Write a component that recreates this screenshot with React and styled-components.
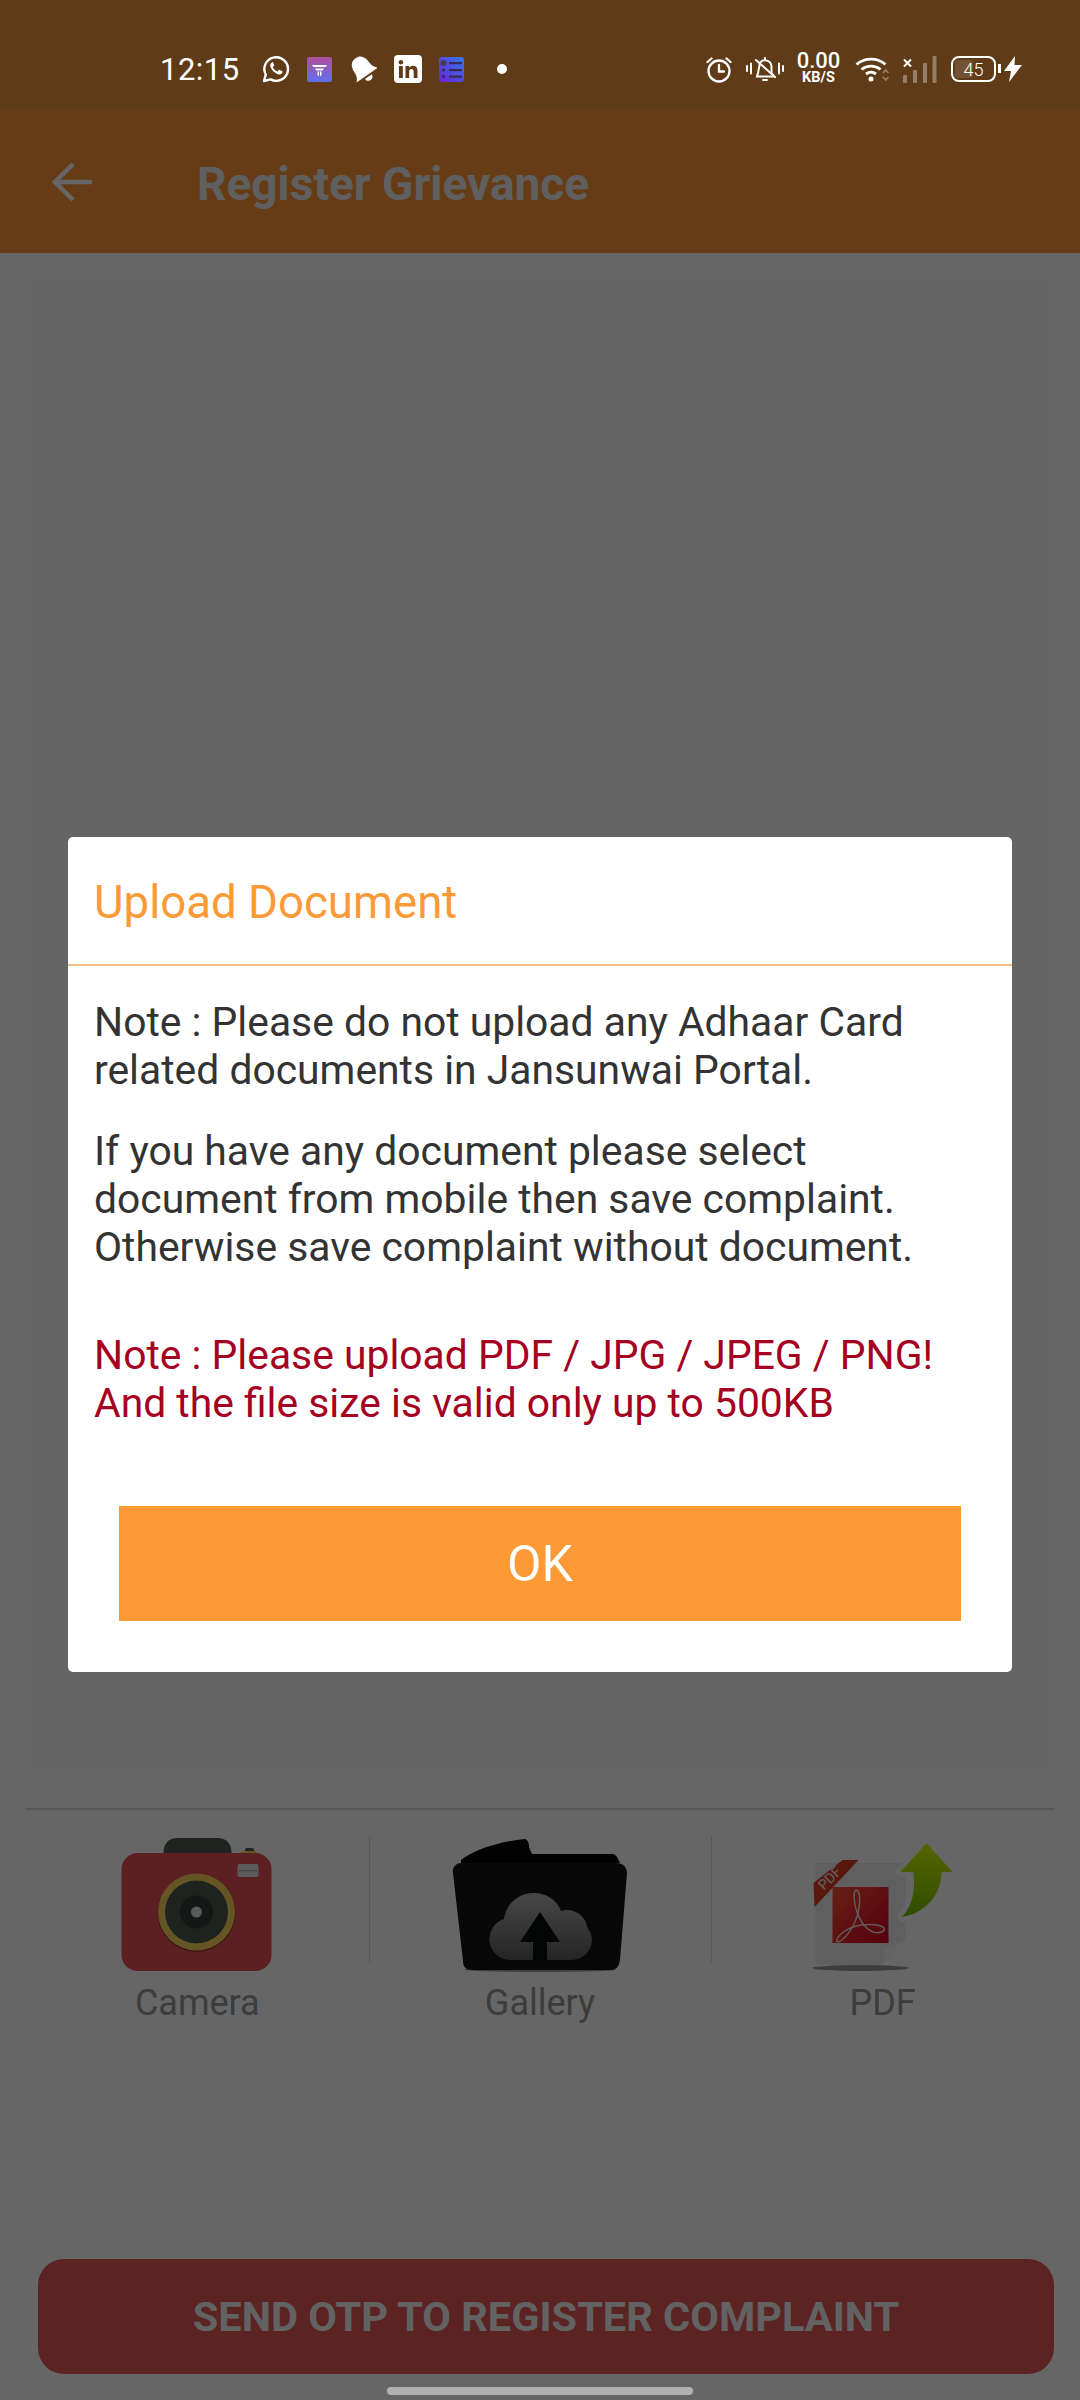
import styled, { createGlobalStyle } from "styled-components"

const App = () => {
  return <Page>
    <GlobalStyle />
    <StatusBar>
      <StatusLeft>
        <Clock>12:15</Clock>
        <WhatsappIcon />
        <FlashIcon />
        <BellIcon />
        <LinkedinIcon />
        <ListIcon />
        <Dot />
      </StatusLeft>
      <StatusRight>
        <Slot><AlarmIcon /></Slot>
        <Slot $left={14}><MuteIcon /></Slot>
        <Slot $left={13}>
          <Speed>
            <b>0.00</b>
            <span>KB/S</span>
          </Speed>
        </Slot>
        <Slot $left={15}><WifiIcon /></Slot>
        <Slot $left={12}><SignalIcon /></Slot>
        <Slot $left={14}>
          <Battery>
            <BatteryFill />
            <BatteryText>45</BatteryText>
          </Battery>
        </Slot>
        <Slot $left={8}><BoltIcon /></Slot>
      </StatusRight>
    </StatusBar>

    <AppBar>
      <svg width="40" height="40" viewBox="0 0 40 40" fill="none" stroke="#fff" strokeWidth="4.5">
        <path d="M40 20H3M21 2L3 20l18 18" />
      </svg>
      <Title>Register Grievance</Title>
    </AppBar>

    <Content>
      <FormCard />
      <Attachments>
        <Attachment>
          <CameraIcon />
          <AttachmentLabel>Camera</AttachmentLabel>
        </Attachment>
        <Attachment>
          <FolderIcon />
          <AttachmentLabel>Gallery</AttachmentLabel>
        </Attachment>
        <Attachment>
          <PdfIcon />
          <AttachmentLabel>PDF</AttachmentLabel>
        </Attachment>
      </Attachments>
      <SubmitRow>
        <SubmitButton>SEND OTP TO REGISTER COMPLAINT</SubmitButton>
      </SubmitRow>
    </Content>

    <Scrim>
      <Dialog>
        <DialogTitle>Upload Document</DialogTitle>
        <DialogBody>
          <Note>Note : Please do not upload any Adhaar Card related documents in Jansunwai Portal.</Note>
          <Note>If you have any document please select document from mobile then save complaint. Otherwise save complaint without document.</Note>
          <Warning>Note : Please upload PDF / JPG / JPEG / PNG!<br />And the file size is valid only up to 500KB</Warning>
        </DialogBody>
        <OkButton>OK</OkButton>
      </Dialog>
    </Scrim>
    <HomeBar />
  </Page>
}

export default App

const WhatsappIcon = () => (
  <svg width="28" height="28" viewBox="0 0 28 28" fill="none">
    <path d="M2 26l1.8-6.4A11.8 11.8 0 1 1 8.6 24.4L2 26z" stroke="#fff" strokeWidth="2.4" strokeLinejoin="round" />
    <path d="M10 7.6c-1.6.8-2.2 2.6-1.4 4.6 1.300 3.200 4 5.800 7.200 7 2 .7 3.800 0 4.600-1.600.3-.7.2-1.200-.3-1.500l-2.400-1.200c-.5-.2-.9-.1-1.200.3l-.8 1c-.3.300-.6.300-1 .1-1.500-.8-2.800-2-3.600-3.500-.2-.4-.2-.7.100-1l.7-.8c.3-.4.3-.7.2-1.100l-1-2.300c-.2-.5-.6-.7-1.100-.6z" fill="#fff" />
  </svg>
)

const FlashIcon = () => (
  <svg width="25" height="25" viewBox="0 0 25 25">
    <defs>
      <linearGradient id="flash" x1="0" y1="0" x2="0" y2="1">
        <stop offset="0" stopColor="#b04e9a" />
        <stop offset="1" stopColor="#5f6ff0" />
      </linearGradient>
    </defs>
    <rect width="25" height="25" rx="2" fill="url(#flash)" />
    <path d="M5 8h15l-1.500 2H6.500zM8 11.500h9l-1.300 2H9.300zM10.500 14.500h1.500v5l-1.500-1.500zM13 14.500h1.500V18L13 19.500z" fill="#fff" />
  </svg>
)

const BellIcon = () => (
  <svg width="28" height="30" viewBox="0 0 30 30" fill="#fff">
    <g transform="rotate(-35 15 15)">
      <path d="M15 1C8.500 1 5.500 6 5.500 12.500c0 5-1.500 7.500-4.500 10.500h28c-3-3-4.500-5.500-4.500-10.500C24.500 6 21.500 1 15 1z" />
      <path d="M10.500 25a4.500 4.500 0 0 0 9 0z" />
    </g>
  </svg>
)

const LinkedinIcon = () => (
  <svg width="28" height="28" viewBox="0 0 28 28">
    <rect width="28" height="28" rx="4" fill="#fff" />
    <rect x="5" y="11" width="3.800" height="12" fill="#5f3b17" />
    <circle cx="6.900" cy="7.200" r="2.300" fill="#5f3b17" />
    <path d="M11.500 11h3.600v1.700c.8-1.300 2.200-2 3.800-2 3 0 4.600 1.900 4.600 5.200V23h-3.800v-6.400c0-1.700-.7-2.700-2.200-2.700s-2.300 1-2.300 2.700V23h-3.700z" fill="#5f3b17" />
  </svg>
)

const ListIcon = () => (
  <svg width="25" height="25" viewBox="0 0 25 25">
    <defs>
      <linearGradient id="list" x1="1" y1="0" x2="0" y2="1">
        <stop offset="0" stopColor="#3478e8" />
        <stop offset="1" stopColor="#6a22d8" />
      </linearGradient>
    </defs>
    <rect width="25" height="25" rx="3" fill="url(#list)" />
    <circle cx="4.500" cy="6" r="3" fill="#4a3a55" />
    <path d="M10 5h13v2.200H10zM10 12h13v2.200H10zM10 18.500h13v2.200H10z" fill="#3a2a50" />
    <circle cx="4.500" cy="13" r="1.500" fill="#3a2a50" />
    <circle cx="4.500" cy="19.500" r="1.500" fill="#3a2a50" />
  </svg>
)

const AlarmIcon = () => (
  <svg width="26" height="27" viewBox="0 0 26 27" fill="none" stroke="#fff" strokeWidth="2.300" strokeLinecap="round">
    <circle cx="13" cy="15" r="10.500" />
    <path d="M13 9v6.500h5M1.500 6L5.500 2.500M24.500 6l-4-3.500" />
  </svg>
)

const MuteIcon = () => (
  <svg width="38" height="28" viewBox="0 0 38 28" fill="none" stroke="#fff" strokeWidth="2" strokeLinecap="round">
    <path d="M1 11v5M5 8.500v10M33 8.500v10M37 11v5" />
    <path d="M11 21.500h17l-2.500-3.500v-6.500a6.500 6.500 0 0 0-11.500-3.800L12 18z" />
    <path d="M19 3v1.500M17 25h4M10 5l19 17" />
  </svg>
)

const WifiIcon = () => (
  <svg width="36" height="26" viewBox="0 0 36 26" fill="none">
    <path d="M1.500 8.500a22 22 0 0 1 29 0M6.500 13.500a15 15 0 0 1 19 0M11 18a8.500 8.500 0 0 1 10 0" stroke="#fff" strokeWidth="2.800" />
    <circle cx="16" cy="23" r="2.500" fill="#fff" />
    <path d="M28 17l2.700-3 2.700 3M28 21l2.700 3 2.700-3" stroke="#fff" strokeOpacity=".35" strokeWidth="1.800" />
  </svg>
)

const SignalIcon = () => (
  <svg width="34" height="27" viewBox="0 0 34 27">
    <path d="M1 3.500l7 7M8 3.500l-7 7" stroke="#fff" strokeWidth="2" />
    <g fill="#fff" fillOpacity=".35">
      <rect y="19" width="4" height="8" rx="1" />
      <rect x="10" y="14" width="4" height="13" rx="1" />
      <rect x="20" y="7" width="4" height="20" rx="1" />
      <rect x="29.500" width="4" height="27" rx="1" />
    </g>
  </svg>
)

const BoltIcon = () => (
  <svg width="18" height="26" viewBox="0 0 18 26" fill="#fff">
    <path d="M11 0L0 15h7l-2 11L18 9h-7.500z" />
  </svg>
)

// the icons below sit under the scrim, so their colours are the undimmed ones
const CameraIcon = () => (
  <svg width="152" height="134" viewBox="0 0 152 134">
    <path d="M42.500 17V14C42.500 6 48 0 56 0h41c8 0 13.500 6 13.500 14v3z" fill="#4e5752" />
    <rect x="124" y="10" width="9" height="6" rx="2" fill="#4e5752" />
    <rect x="119.500" y="13" width="16" height="4" rx="2" fill="#ffd45a" />
    <rect x=".5" y="15" width="150" height="118" rx="16" fill="#e65255" />
    <rect x="116.500" y="26" width="21" height="13" rx="2" fill="#e4e4e4" />
    <rect x="118" y="32" width="18" height="1.500" fill="#b5b5b5" />
    <circle cx="75.500" cy="75" r="39" fill="#9a3436" />
    <circle cx="75.500" cy="74" r="38.500" fill="#ffd45a" />
    <circle cx="75.500" cy="74" r="31.500" fill="#4e5752" />
    <circle cx="75.500" cy="74" r="16.500" fill="#373b3a" />
    <circle cx="75.500" cy="74" r="5.500" fill="#e0e0e0" />
  </svg>
)

const FolderIcon = () => (
  <svg width="176" height="134" viewBox="0 0 176 134">
    <defs>
      <linearGradient id="cloud" x1="0" y1="0" x2="0" y2="1">
        <stop offset="0" stopColor="#b4b4b4" />
        <stop offset="1" stopColor="#5c5c5c" />
      </linearGradient>
    </defs>
    <ellipse cx="88" cy="131.500" rx="76" ry="2.500" fill="#9a9a9a" />
    <path d="M9 22c12-10 40-19 64-21 3 1 4 4 4 8l3 7h80c3 0 5 2 6 5l2 4H9z" fill="#080808" />
    <path d="M10 25h154c7 0 11 4 11 10l-7 87c-1 7-4 10-10 10H20c-6 0-9-3-9-9L1 35c-1-6 3-10 9-10z" fill="#141618" />
    <path d="M58 122a21 21 0 0 1-6-41c2-15 14-26 30-26 12 0 23 7 27 18 2-.6 4-1 6-1 11 0 19 8 20 17a20 20 0 0 1-15 33z" fill="url(#cloud)" />
    <path d="M88 74l20 30H95v18H81V104H68z" fill="#0c0d0e" />
  </svg>
)

const PdfIcon = () => (
  <svg width="146" height="134" viewBox="0 0 146 134">
    <defs>
      <linearGradient id="arrow" x1="0" y1="0" x2="0" y2="1">
        <stop offset="0" stopColor="#d8ff00" />
        <stop offset="1" stopColor="#74bf00" />
      </linearGradient>
      <linearGradient id="acro" x1="0" y1="0" x2="1" y2="1">
        <stop offset="0" stopColor="#ff5236" />
        <stop offset="1" stopColor="#d80020" />
      </linearGradient>
    </defs>
    <ellipse cx="50.500" cy="130" rx="48" ry="3" fill="#999" />
    <path d="M5.500 25H95.500V102L72.500 127H8.500q-3 0-3-3z" fill="#eeeef0" />
    <path d="M72.500 127l2-17 21-8z" fill="#fbfbfb" />
    <path d="M3.500 45L32.500 22h16L4.500 69z" fill="#e23a22" />
    <text x="19.500" y="45" textAnchor="middle" transform="rotate(-45 19.500 40)" fontSize="14" fontFamily="Roboto, sans-serif" fill="#f0f0f0">PDF</text>
    <rect x="22.500" y="49" width="56" height="56" fill="url(#acro)" />
    <path d="M46.500 52c-4 0-3 16 3 28 6 12 16 18 24 13 4-4-6-8-22-6-14 2-24 10-25 16 2 3 10-3 17-16 7-13 8-33 3-35z" fill="none" stroke="#f4e4e4" strokeWidth="1.500" />
    <path d="M116.500 5L142.500 34H131.500C131 58 115 75 92 79 104 66 105 50 103.500 34H90.500z" fill="#fff" stroke="#fff" strokeWidth="10" strokeLinejoin="round" />
    <path d="M116.500 5L142.500 34H131.500C131 58 115 75 92 79 104 66 105 50 103.500 34H90.500z" fill="url(#arrow)" />
  </svg>
)

const GlobalStyle = createGlobalStyle`
  html, body {
    margin: 0;
    padding: 0;
    background: #666;
  }
  * {
    box-sizing: border-box;
  }
`

const Page = styled.main`
  position: relative;
  width: 1080px;
  height: 2400px;
  overflow: hidden;
  display: flex;
  flex-direction: column;
  background: #fff;
  font-family: Roboto, sans-serif;
`

const StatusBar = styled.div`
  position: relative;
  z-index: 2;
  height: 110px;
  flex-shrink: 0;
  padding: 28px 58px 0 160px;
  background: #5f3b17;
  display: flex;
  justify-content: space-between;
  align-items: center;
`

const StatusLeft = styled.div`
  display: flex;
  align-items: center;
  gap: 17px;
`

const StatusRight = styled.div`
  display: flex;
  align-items: center;
`

const Slot = styled.div`
  display: flex;
  margin-left: ${(p) => p.$left || 0}px;
`

const Clock = styled.span`
  width: 78px;
  margin-right: 7px;
  color: #fff;
  font-size: 31px;
  letter-spacing: 0.5px;
`

const Dot = styled.span`
  width: 10px;
  height: 10px;
  margin-left: 16px;
  border-radius: 50%;
  background: #fff;
`

const Speed = styled.div`
  width: 43px;
  color: #fff;
  display: flex;
  flex-direction: column;
  align-items: center;
  line-height: 14px;

  b {
    font-size: 22px;
    font-weight: 500;
  }
  span {
    margin-top: 3px;
    font-size: 14.5px;
    font-weight: 700;
  }
`

const Battery = styled.div`
  position: relative;
  width: 45px;
  height: 26px;
  border: 2.5px solid #fff;
  border-radius: 8px;
  display: flex;
  align-items: center;
  justify-content: center;

  &::after {
    content: "";
    position: absolute;
    right: -7px;
    top: 6px;
    width: 3px;
    height: 9px;
    background: #fff;
  }
`

const BatteryFill = styled.div`
  position: absolute;
  left: 2px;
  top: 2px;
  bottom: 2px;
  width: 45%;
  border-radius: 3px;
  background: rgba(255, 255, 255, 0.12);
`

const BatteryText = styled.span`
  position: relative;
  color: #fff;
  font-size: 18px;
  font-weight: 300;
`

const AppBar = styled.header`
  height: 143px;
  flex-shrink: 0;
  padding-left: 52px;
  background: #fd9639;
  display: flex;
  align-items: center;
  gap: 105px;
`

const Title = styled.h1`
  margin: 4px 0 0;
  color: #eee;
  font-size: 46px;
  font-weight: 700;
`

const Content = styled.div`
  flex: 1;
  display: flex;
  flex-direction: column;
  background: #fff;
`

const FormCard = styled.div`
  height: 1490px;
  margin: 27px 26px 0;
  background: #fcfcfc;
`

const Attachments = styled.section`
  margin: 38px 26px 0;
  padding-top: 26px;
  border-top: 2px solid #dcdcdc;
  display: grid;
  grid-template-columns: repeat(3, 1fr);
`

const Attachment = styled.div`
  position: relative;
  display: flex;
  flex-direction: column;
  align-items: center;
  height: 190px;

  svg {
    margin-top: 2px;
  }

  & + &::before {
    content: "";
    position: absolute;
    left: 0;
    top: 0;
    width: 1px;
    height: 127px;
    background: #dcdcdc;
  }
`

const AttachmentLabel = styled.span`
  margin-top: 10px;
  color: #969696;
  font-size: 36px;
  line-height: 42px;
`

const SubmitRow = styled.div`
  margin-top: 233px;
  padding-left: 38px;
`

const SubmitButton = styled.button`
  width: 1016px;
  height: 115px;
  border: 0;
  border-radius: 26px;
  background: #e65858;
  color: #f4f4f4;
  font-family: Roboto, sans-serif;
  font-size: 41.5px;
  font-weight: 700;
`

const Scrim = styled.div`
  position: absolute;
  inset: 0;
  padding: 837px 68px 0;
  background: rgba(0, 0, 0, 0.6);
`

const Dialog = styled.div`
  height: 835px;
  border-radius: 5px;
  background: #fff;
  display: flex;
  flex-direction: column;
`

const DialogTitle = styled.h2`
  height: 129px;
  margin: 0;
  padding: 2px 26px 0;
  border-bottom: 2px solid #f2c27f;
  color: #fd9a38;
  font-size: 45.6px;
  font-weight: 400;
  line-height: 128px;
`

const DialogBody = styled.div`
  padding: 32px 27px 0 26px;
  font-size: 40.85px;
  line-height: 48px;
`

const Note = styled.p`
  margin: 0 0 33px;
  color: #333;
`

const Warning = styled.p`
  margin: 60px 0 0;
  color: #a50021;
`

const OkButton = styled.button`
  width: 842px;
  height: 115px;
  margin: 79px 0 0 51px;
  border: 0;
  background: #fe9a36;
  color: #fff;
  font-family: Roboto, sans-serif;
  font-size: 50px;
  font-weight: 400;
`

const HomeBar = styled.div`
  position: absolute;
  z-index: 3;
  left: 387px;
  bottom: 5px;
  width: 306px;
  height: 8px;
  border-radius: 4px;
  background: #b0b0b0;
`
